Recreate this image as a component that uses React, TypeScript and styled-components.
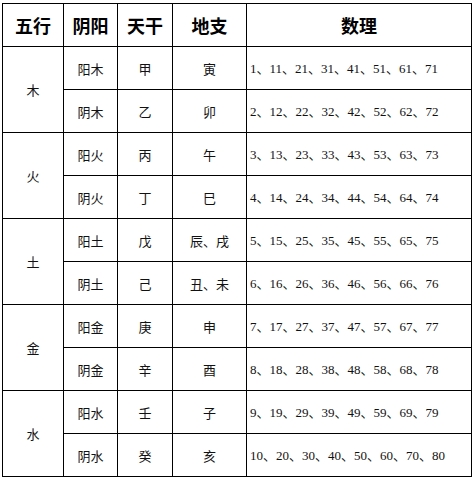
import React from "react";
import styled, { createGlobalStyle } from "styled-components";

const Global = createGlobalStyle`
  html, body { margin: 0; padding: 0; background: #fff; }
  body { font-family: "Noto Sans CJK SC", sans-serif; color: #000; }
`;

const Wrap = styled.div`
  padding: 3px 0 0 2px;
`;

const Table = styled.table`
  border-collapse: separate;
  border-spacing: 0;
  table-layout: fixed;
  width: 469px;
  border-left: 1px solid #000;
  border-top: 1px solid #000;
`;

const Cell = styled.td<{ $head?: boolean; $left?: boolean; $num?: boolean }>`
  border-right: 1px solid #000;
  border-bottom: 1px solid #000;
  padding: ${(p) => (p.$left ? "0 0 0 3px" : "0")};
  height: 42px;
  text-align: ${(p) => (p.$left ? "left" : "center")};
  vertical-align: middle;
  font-family: ${(p) =>
    p.$num
      ? `"Liberation Serif", "Noto Sans CJK SC", serif`
      : `"Noto Sans CJK SC", sans-serif`};
  font-size: ${(p) => (p.$head ? "18px" : "13px")};
  font-weight: ${(p) => (p.$head ? 700 : 400)};
  line-height: 1;
  white-space: nowrap;
  color: ${(p) => (p.$head ? "#000" : "#111")};
`;

const rows = [
  { el: "木", yy: "阳木", tg: "甲", dz: "寅", n: "1、11、21、31、41、51、61、71" },
  { el: "", yy: "阴木", tg: "乙", dz: "卯", n: "2、12、22、32、42、52、62、72" },
  { el: "火", yy: "阳火", tg: "丙", dz: "午", n: "3、13、23、33、43、53、63、73" },
  { el: "", yy: "阴火", tg: "丁", dz: "巳", n: "4、14、24、34、44、54、64、74" },
  { el: "土", yy: "阳土", tg: "戊", dz: "辰、戌", n: "5、15、25、35、45、55、65、75" },
  { el: "", yy: "阴土", tg: "己", dz: "丑、未", n: "6、16、26、36、46、56、66、76" },
  { el: "金", yy: "阳金", tg: "庚", dz: "申", n: "7、17、27、37、47、57、67、77" },
  { el: "", yy: "阴金", tg: "辛", dz: "酉", n: "8、18、28、38、48、58、68、78" },
  { el: "水", yy: "阳水", tg: "壬", dz: "子", n: "9、19、29、39、49、59、69、79" },
  { el: "", yy: "阴水", tg: "癸", dz: "亥", n: "10、20、30、40、50、60、70、80" },
];

export default function App() {
  return (
    <>
      <Global />
      <Wrap>
        <Table>
          <colgroup>
            <col style={{ width: 61 }} />
            <col style={{ width: 54 }} />
            <col style={{ width: 55 }} />
            <col style={{ width: 74 }} />
            <col style={{ width: 225 }} />
          </colgroup>
          <tbody>
            <tr>
              <Cell as="th" $head>五行</Cell>
              <Cell as="th" $head>阴阳</Cell>
              <Cell as="th" $head>天干</Cell>
              <Cell as="th" $head>地支</Cell>
              <Cell as="th" $head>数理</Cell>
            </tr>
            {rows.map((r, i) => (
              <tr key={i}>
                {r.el && <Cell rowSpan={2}>{r.el}</Cell>}
                <Cell>{r.yy}</Cell>
                <Cell>{r.tg}</Cell>
                <Cell>{r.dz}</Cell>
                <Cell $left $num>{r.n}</Cell>
              </tr>
            ))}
          </tbody>
        </Table>
      </Wrap>
    </>
  );
}
